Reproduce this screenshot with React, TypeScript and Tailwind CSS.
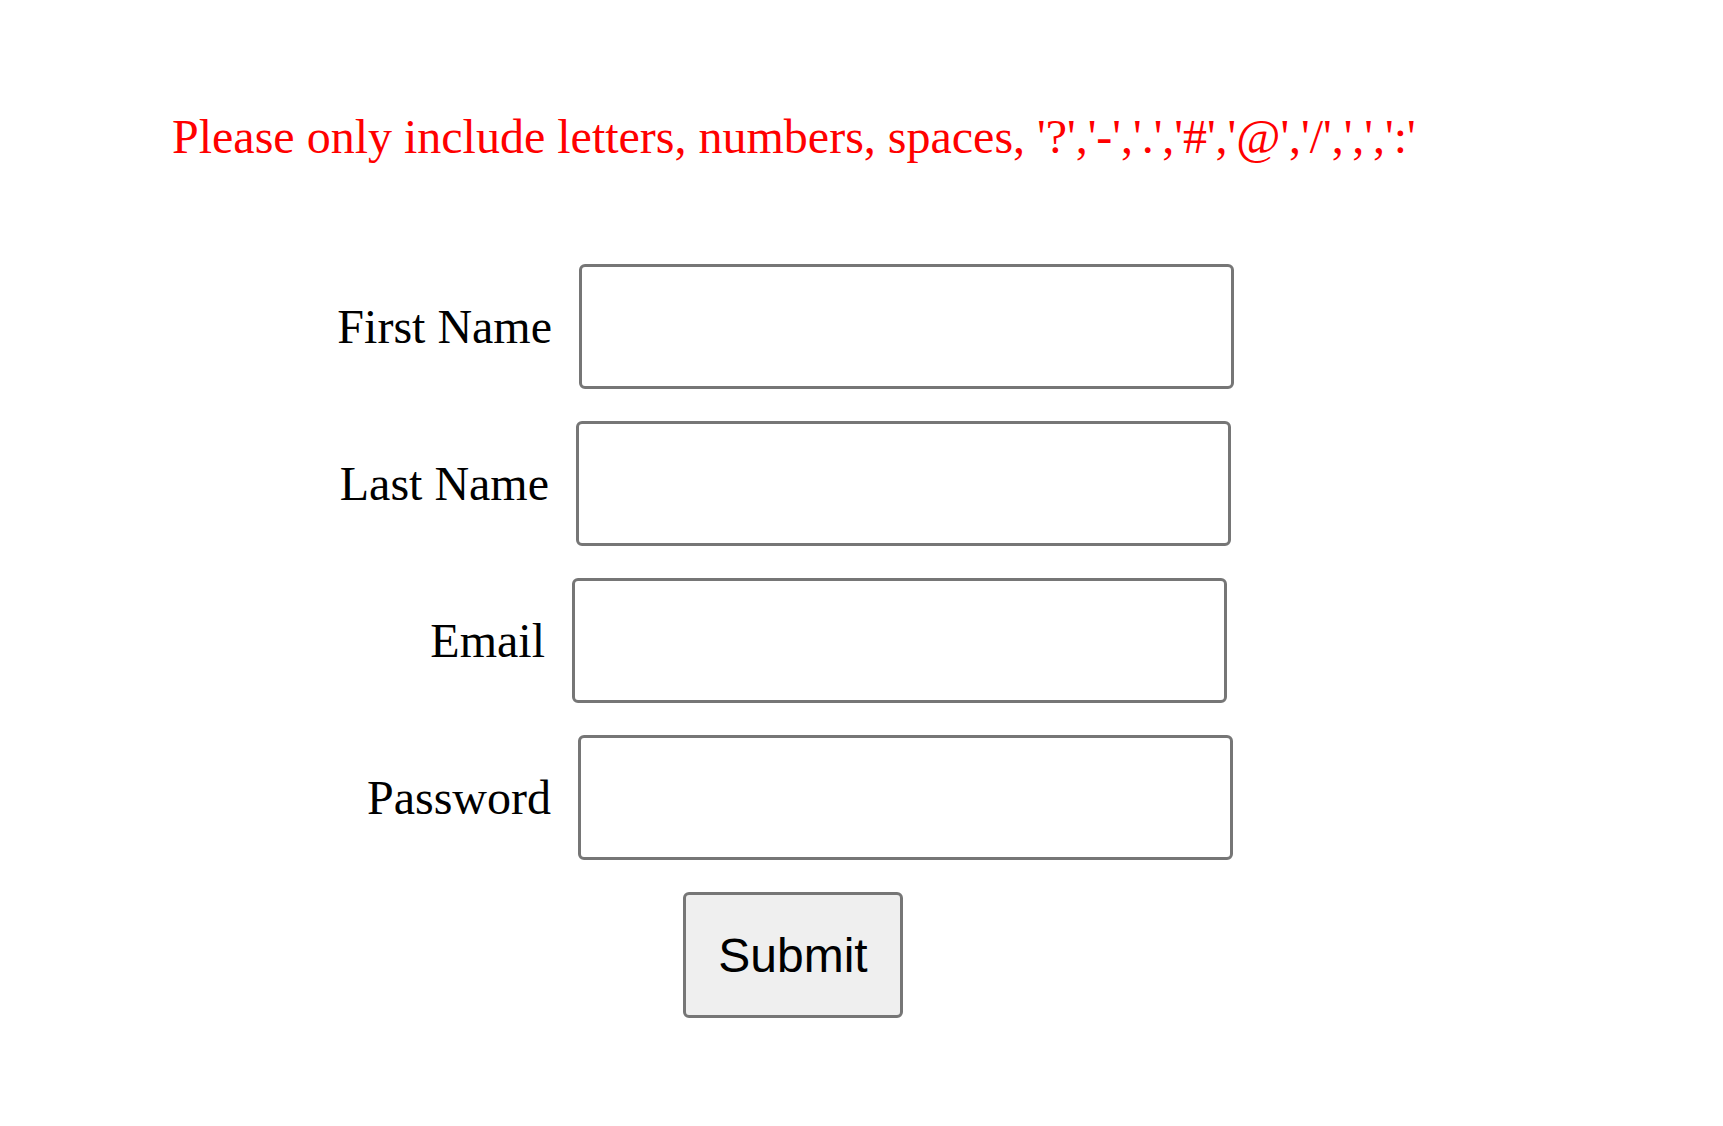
import React from "react";

const serif = "font-['Liberation_Serif','Times_New_Roman',serif]";

function Row({ label, labelW, children }: { label: string; labelW: string; children: React.ReactNode }) {
  return (
    <div className="flex items-center">
      <label className={`${labelW} shrink-0 text-right text-[48px] leading-[53px] text-black ${serif} whitespace-nowrap`}>
        {label}
      </label>
      {children}
    </div>
  );
}

const inputCls =
  "ml-[27px] w-[655px] h-[125px] shrink-0 border-[3px] border-[#767676] rounded-[6px] bg-white outline-none";

export default function App() {
  return (
    <div className="min-h-[1126px] w-full bg-white">
      <div
        className={`pt-[110px] pl-[172px] text-[48px] leading-[53px] text-[#ff0000] whitespace-nowrap ${serif}`}
      >
        {"Please only include letters, numbers, spaces, '?','-','.','#','@','/',',',':'"}
      </div>
      <form className="mt-[101px] flex flex-col gap-[32px]" onSubmit={(e) => e.preventDefault()}>
        <Row label="First Name" labelW="w-[552px]">
          <input type="text" className={inputCls} />
        </Row>
        <Row label="Last Name" labelW="w-[549px]">
          <input type="text" className={inputCls} />
        </Row>
        <Row label="Email" labelW="w-[545px]">
          <input type="text" className={inputCls} />
        </Row>
        <Row label="Password" labelW="w-[551px]">
          <input type="password" className={inputCls} />
        </Row>
        <div className="pl-[683px]">
          <button
            type="submit"
            className="w-[220px] h-[126px] bg-[#efefef] border-[3px] border-[#767676] rounded-[6px] text-[48px] leading-[55px] text-black font-['Liberation_Sans',Arial,sans-serif]"
          >
            Submit
          </button>
        </div>
      </form>
    </div>
  );
}
